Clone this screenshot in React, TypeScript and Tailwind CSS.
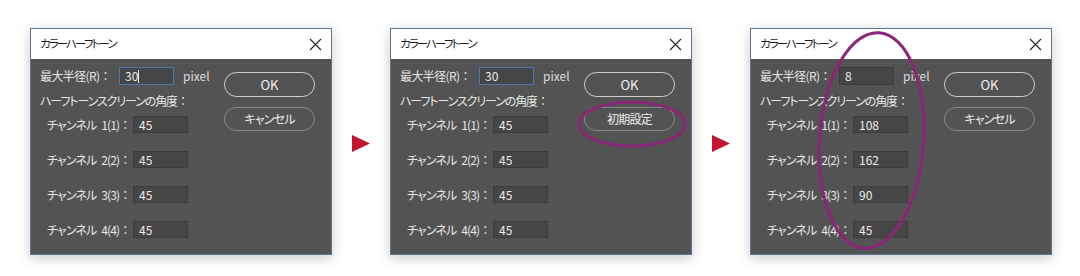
import React from "react";

type DialogProps = {
  radius: string;
  focused: boolean;
  caret?: boolean;
  values: string[];
  secondButton: string;
  overlay?: React.ReactNode;
};

function Colon() {
  return <span className="[font-feature-settings:normal] tracking-normal">：</span>;
}

function Field({ value, focused, caret, tall }: { value: string; focused?: boolean; caret?: boolean; tall?: boolean }) {
  return (
    <div
      className={
        "shrink-0 flex items-center pl-[5px] text-[12px] text-[#ececec] bg-[#464646] border " +
        (focused ? "border-[#4a79ad] " : "border-[#3c3c3c] ") +
        (tall ? "w-[55px] h-[18px]" : "w-[55px] h-[17px]")
      }
    >
      <span>{value}</span>
      {caret && <span className="w-px h-[13px] bg-[#f0f0f0]" />}
    </div>
  );
}

function Dialog({ radius, focused, caret, values, secondButton, overlay }: DialogProps) {
  return (
    <div className="relative w-[302px] h-[227px] shrink-0 border border-[#5b7794] bg-[#535353] shadow-[0_3px_12px_rgba(0,0,0,0.22)] flex flex-col">
      <div className="h-[30px] bg-white flex items-center justify-between pl-[9px] pr-[9px]">
        <span className="text-[11.5px] text-[#1b1b1b] tracking-[-1.9px] [font-feature-settings:'palt']">カラーハーフトーン</span>
        <svg width="13" height="13" viewBox="0 0 13 13" className="mt-[1px]">
          <path d="M1 1 L12 12 M12 1 L1 12" stroke="#222" strokeWidth="1.1" fill="none" />
        </svg>
      </div>
      <div className="flex flex-1 text-[#e6e6e6] text-[12px] [font-feature-settings:'palt']">
        <div className="w-[183px] shrink-0 pl-[9px] pt-[8px] flex flex-col">
          <div className="flex items-center h-[18px]">
            <span className="w-[79px] shrink-0 whitespace-nowrap tracking-[-0.6px]">
              最大半径(R)<Colon />
            </span>
            <Field value={radius} focused={focused} caret={caret} tall />
            <span className="ml-[9px] text-[#dcdcdc]">pixel</span>
          </div>
          <div className="mt-[8px] h-[16px] leading-[16px] whitespace-nowrap tracking-[-1.1px]">
            ハーフトーンスクリーンの角度<Colon />
          </div>
          <div className="mt-[7px] flex flex-col gap-[18px]">
            {values.map((v, i) => (
              <div key={i} className="flex items-center h-[17px]">
                <span className="w-[93px] shrink-0 pl-[7px] whitespace-nowrap tracking-[-0.9px]">
                  チャンネル<span className="ml-[5px]">{i + 1}({i + 1})</span>
                  <Colon />
                </span>
                <Field value={v} />
              </div>
            ))}
          </div>
        </div>
        <div className="pt-[13px] pl-[10px] flex flex-col gap-[10px]">
          <div className="w-[91px] h-[25px] rounded-full border-[1.5px] border-[#cfcfcf] flex items-center justify-center text-[13px] text-[#f2f2f2]">
            OK
          </div>
          <div className="w-[91px] h-[24px] rounded-full border border-[#888888] flex items-center justify-center text-[12px] text-[#ececec] tracking-[-0.8px]">
            {secondButton}
          </div>
        </div>
      </div>
      {overlay}
    </div>
  );
}

function Arrow() {
  return (
    <div className="w-[58px] shrink-0 flex justify-center pt-[107px]">
      <svg width="18" height="17" viewBox="0 0 18 17">
        <polygon points="0,0 18,8.5 0,17" fill="#c4122f" />
      </svg>
    </div>
  );
}

export default function App() {
  return (
    <div
      className="w-[1080px] h-[276px] bg-white flex items-start pl-[30px] pt-[28px] overflow-hidden"
      style={{ fontFamily: '"Noto Sans CJK JP", "Noto Sans", sans-serif' }}
    >
      <Dialog radius="30" focused caret values={["45", "45", "45", "45"]} secondButton="キャンセル" />
      <Arrow />
      <Dialog
        radius="30"
        focused
        values={["45", "45", "45", "45"]}
        secondButton="初期設定"
        overlay={
          <svg className="absolute left-0 top-0 pointer-events-none" width="302" height="227">
            <ellipse cx="241" cy="95" rx="53" ry="22" fill="none" stroke="#8d2478" strokeWidth="3" opacity="0.95" />
          </svg>
        }
      />
      <Arrow />
      <Dialog
        radius="8"
        focused={false}
        values={["108", "162", "90", "45"]}
        secondButton="キャンセル"
        overlay={
          <svg className="absolute -left-px -top-px pointer-events-none overflow-visible" width="302" height="227">
            <ellipse
              cx="121.5"
              cy="112.5"
              rx="52"
              ry="108"
              fill="none"
              stroke="#8d2478"
              strokeWidth="3"
              transform="rotate(4 121.5 112.5)"
            />
          </svg>
        }
      />
    </div>
  );
}
